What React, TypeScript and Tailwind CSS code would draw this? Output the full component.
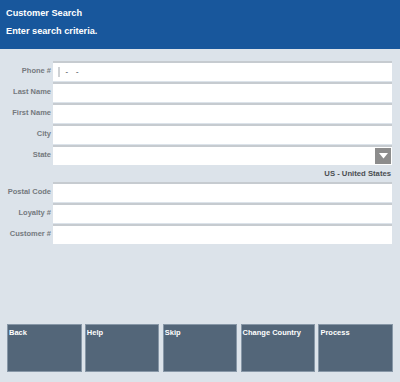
import React from "react";

const font = { fontFamily: '"Liberation Sans", Arial, sans-serif' };

function Row({ label, children }: { label: string; children?: React.ReactNode }) {
  return (
    <div className="flex h-[20px] mb-[1px] items-stretch">
      <div className="w-[53px] shrink-0 flex items-center justify-end pr-[2px] text-[7.5px] font-bold text-[#74797e]">
        {label}
      </div>
      <div className="flex-1 mr-[8px] bg-white border-t-2 border-[#c6cbd0] relative flex items-center">
        {children}
      </div>
    </div>
  );
}

export default function App() {
  const buttons = ["Back", "Help", "Skip", "Change Country", "Process"];
  return (
    <div style={font} className="w-[400px] h-[382px] bg-[#dce3ea] flex flex-col overflow-hidden">
      <div className="h-[49px] bg-[#18579c] px-[6px] pt-[8px] text-white font-bold text-[9.2px] leading-[11px]">
        <div>Customer Search</div>
        <div className="mt-[7px]">Enter search criteria.</div>
      </div>
      <div className="pt-[12px]">
        <Row label="Phone #">
          <div className="ml-[5px] w-[1.5px] h-[10px] bg-[#cfd2d5]" />
          <span className="ml-[6px] text-[7.5px] font-bold text-[#74797e]">-</span>
          <span className="ml-[8px] text-[7.5px] font-bold text-[#74797e]">-</span>
        </Row>
        <Row label="Last Name" />
        <Row label="First Name" />
        <Row label="City" />
        <Row label="State">
          <div className="absolute right-[1px] top-[1px] w-[16px] h-[16px] bg-[#8c8c8c] flex items-center justify-center">
            <svg width="9" height="6" viewBox="0 0 9 6">
              <polygon points="0,0 9,0 4.5,5.5" fill="#fff" />
            </svg>
          </div>
        </Row>
        <div className="h-[16px] flex items-center justify-end pr-[9px] text-[7.7px] font-bold text-[#4a4e52]">
          US - United States
        </div>
        <Row label="Postal Code" />
        <Row label="Loyalty #" />
        <Row label="Customer #" />
      </div>
      <div className="flex-1" />
      <div className="flex gap-[3.3px] px-[7px] mb-[10px]">
        {buttons.map((b) => (
          <div
            key={b}
            className="flex-1 h-[48px] bg-[#536679] border border-[#8797a7] text-white text-[7.5px] font-bold pl-[1px] pt-[3px] leading-[9px]"
          >
            {b}
          </div>
        ))}
      </div>
    </div>
  );
}
